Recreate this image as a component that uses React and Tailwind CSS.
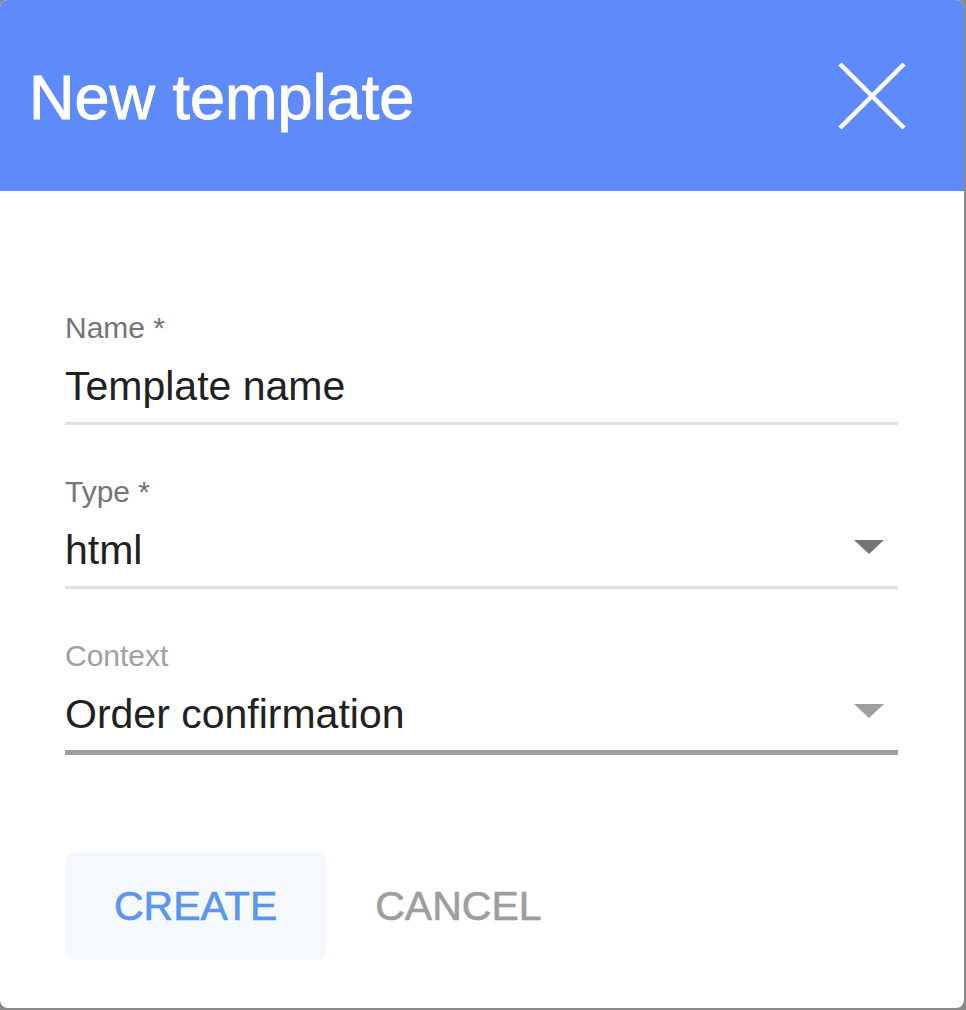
import { useState } from "react";

function CloseIcon() {
  return (
    <svg width="68" height="68" viewBox="0 0 68 68" fill="none">
      <path d="M2 2 L66 66 M66 2 L2 66" stroke="#ffffff" strokeWidth="4.5" />
    </svg>
  );
}

function Caret({ color }) {
  return (
    <svg width="30" height="14" viewBox="0 0 30 14">
      <path d="M0 0 H30 L15 14 Z" fill={color} />
    </svg>
  );
}

function Field({ label, value, labelColor, select, caretColor, lineClass }) {
  return (
    <div className="flex flex-col">
      <div className={`text-[30px] leading-[34px] ${labelColor}`}>{label}</div>
      <div className="mt-[17px] flex items-center justify-between h-[48px]">
        <span className="text-[41px] leading-[48px] text-[#212121]">{value}</span>
        {select && (
          <span className="mr-[14px] mt-[-6px]">
            <Caret color={caretColor} />
          </span>
        )}
      </div>
      <div className={`mt-[12px] w-full ${lineClass}`} />
    </div>
  );
}

export default function App() {
  const [name] = useState("Template name");

  return (
    <div
      className="w-[966px] h-[1010px] bg-[#8a8a8a]"
      style={{ fontFamily: '"Liberation Sans", Arial, sans-serif' }}
    >
      <div className="w-[964px] h-[1008px] bg-white rounded-[8px] overflow-hidden flex flex-col">
        <div className="h-[191px] shrink-0 bg-[#5f8afa] flex items-center justify-between pl-[29px] pr-[58px]">
          <h1 className="text-[63px] leading-none text-white mt-[4px] [-webkit-text-stroke:1px_white]">
            New template
          </h1>
          <CloseIcon />
        </div>

        <div className="flex flex-col pl-[65px] pr-[66px] pt-[120px]">
          <div className="flex flex-col gap-[50px]">
            <Field
              label="Name *"
              value={name}
              labelColor="text-[#757575]"
              lineClass="h-[3px] bg-[#e0e0e0]"
            />
            <Field
              label="Type *"
              value="html"
              labelColor="text-[#757575]"
              select
              caretColor="#757575"
              lineClass="h-[3px] bg-[#e0e0e0]"
            />
            <Field
              label="Context"
              value="Order confirmation"
              labelColor="text-[#a0a0a0]"
              select
              caretColor="#9e9e9e"
              lineClass="h-[5px] bg-[#9e9e9e]"
            />
          </div>

          <div className="mt-[98px] flex items-center">
            <button className="h-[107px] px-[49px] rounded-[8px] bg-[#f5f9fd] text-[41px] text-[#5b95f0] [-webkit-text-stroke:0.6px_#5b95f0]">
              CREATE
            </button>
            <button className="h-[107px] px-[49px] text-[41px] text-[#9e9e9e] [-webkit-text-stroke:0.6px_#9e9e9e]">
              CANCEL
            </button>
          </div>
        </div>
      </div>
    </div>
  );
}
